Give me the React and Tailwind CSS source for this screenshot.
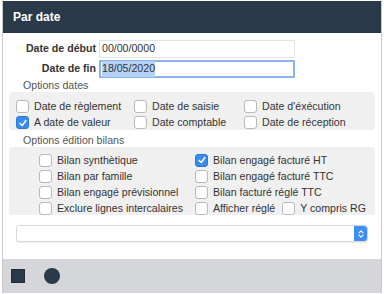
import React from 'react';

const Box = ({ checked }) =>
  checked ? (
    <span className="w-[13px] h-[13px] rounded-[3px] bg-[#3b8cf0] border border-[#2f78d6] flex items-center justify-center shrink-0">
      <svg viewBox="0 0 12 12" className="w-[10px] h-[10px]"><path d="M2.5 6.5 L5 9 L9.5 3" fill="none" stroke="white" strokeWidth="1.8" strokeLinecap="round" strokeLinejoin="round" /></svg>
    </span>
  ) : (
    <span className="w-[13px] h-[13px] rounded-[3px] bg-white border border-[#b9b9b9] shrink-0" />
  );

const Check = ({ label, checked, className = '' }) => (
  <div className={`flex items-center gap-[5px] ${className}`}>
    <Box checked={checked} />
    <span>{label}</span>
  </div>
);

export default function App() {
  return (
    <div className="w-[384px] h-[294px] bg-white overflow-hidden text-[10.6px] text-[#333]" style={{ fontFamily: '"Liberation Sans", Arial, sans-serif' }}>
      <div className="h-[293px] mx-[2px] flex flex-col border-x border-[#c8c8c8]">
        <div className="h-[32px] mt-[1px] bg-[#2b3a4b] flex items-center px-[10px] text-white font-bold text-[12px]">Par date</div>
        <div className="flex-1 bg-white px-[6px] pt-[7px]">
          <div className="flex items-center h-[18px]">
            <span className="w-[90px] text-right font-bold pr-[3px]">Date de début</span>
            <div className="w-[196px] h-[18px] border border-[#e3e3e3] px-[2px] flex items-center">00/00/0000</div>
          </div>
          <div className="flex items-center h-[18px] mt-[2px]">
            <span className="w-[90px] text-right font-bold pr-[3px]">Date de fin</span>
            <div className="w-[196px] h-[18px] border-2 border-[#8ab4ea] px-[1px] flex items-center"><span className="bg-[#b5d3f8]">18/05/2020</span></div>
          </div>
          <div className="text-[#555] pl-[14px] mt-[1px] leading-[12px]">Options dates</div>
          <div className="bg-[#f0f0f0] rounded-[4px] mt-[1px] h-[38px] pl-[7px] pt-[7px] grid grid-cols-[118px_110px_1fr] gap-y-[2px] leading-[13px]">
            <Check label="Date de règlement" />
            <Check label="Date de saisie" />
            <Check label="Date d'éxécution" />
            <Check label="A date de valeur" checked />
            <Check label="Date comptable" />
            <Check label="Date de réception" />
          </div>
          <div className="text-[#555] pl-[14px] mt-[4px] leading-[12px]">Options édition bilans</div>
          <div className="bg-[#f0f0f0] rounded-[4px] mt-[1px] h-[68px] pl-[30px] pt-[6px] grid grid-cols-[156px_1fr] gap-y-[2px] leading-[13px]">
            <Check label="Bilan synthètique" />
            <Check label="Bilan engagé facturé HT" checked />
            <Check label="Bilan par famille" />
            <Check label="Bilan engagé facturé TTC" />
            <Check label="Bilan engagé prévisionnel" />
            <Check label="Bilan facturé réglé TTC" />
            <Check label="Exclure lignes intercalaires" />
            <div className="flex items-center">
              <Check label="Afficher réglé" />
              <Check label="Y compris RG" className="ml-[7px]" />
            </div>
          </div>
          <div className="mt-[10px] mx-[7px] h-[17px] flex rounded-[3px] border border-[#d8d8d8] bg-white shadow-[0_1px_1px_rgba(0,0,0,0.08)]">
            <div className="flex-1" />
            <div className="w-[13px] bg-[#3d8ef2] rounded-r-[3px] flex items-center justify-center">
              <svg viewBox="0 0 10 14" className="w-[8px] h-[12px]"><path d="M2.5 5.5 L5 3 L7.5 5.5 M2.5 8.5 L5 11 L7.5 8.5" fill="none" stroke="white" strokeWidth="1.4" strokeLinecap="round" strokeLinejoin="round" /></svg>
            </div>
          </div>
        </div>
        <div className="h-[34px] bg-[#d4d6da] flex items-center pl-[8px] gap-[19px]">
          <span className="w-[14px] h-[14px] bg-[#2b3a4b] border border-[#1e2a36]" />
          <span className="w-[16px] h-[16px] rounded-full bg-[#2b3a4b]" />
        </div>
      </div>
    </div>
  );
}
